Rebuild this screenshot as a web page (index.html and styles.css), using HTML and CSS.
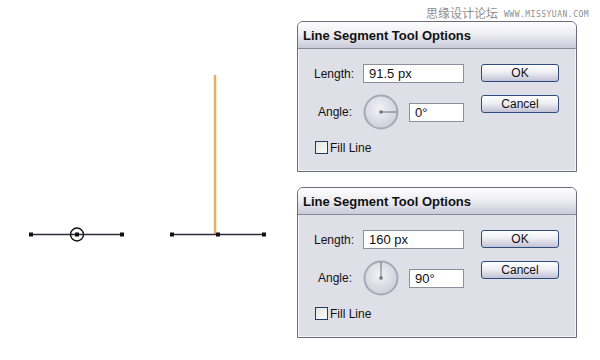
FILE: index.html
```html
<!DOCTYPE html>
<html lang="en">
<head>
  <meta charset="UTF-8" />
  <title>Line Segment Tool Options</title>
  <link rel="stylesheet" href="styles.css">
</head>
<body>
  <div class="pagina">
    <!-- area de desenho com as duas linhas -->
    <svg class="desenho" width="297" height="360" viewBox="0 0 297 360">
      <line x1="31" y1="234.5" x2="122" y2="234.5" class="traco"/>
      <rect x="29" y="232.5" width="4" height="4" class="ponto"/>
      <rect x="120" y="232.5" width="4" height="4" class="ponto"/>
      <rect x="75" y="232.5" width="4" height="4" class="ponto"/>
      <circle cx="77" cy="234.5" r="6.5" class="alvo"/>

      <line x1="215" y1="75" x2="215" y2="234" class="laranja"/>
      <line x1="172" y1="234.5" x2="264" y2="234.5" class="traco"/>
      <rect x="170" y="232.5" width="4" height="4" class="ponto"/>
      <rect x="216" y="232.5" width="4" height="4" class="ponto"/>
      <rect x="262" y="232.5" width="4" height="4" class="ponto"/>
    </svg>

    <div class="dialogos">
      <div class="dialogo">
        <div class="titulo">Line Segment Tool Options</div>
        <div class="corpo">
          <div class="form">
            <span class="rotulo">Length:</span>
            <div class="campo largo">91.5 px</div>
            <span class="rotulo">Angle:</span>
            <div class="linha-angulo">
              <svg class="dial" width="36" height="36" viewBox="0 0 36 36">
                <defs>
                  <radialGradient id="fundo1" cx="45%" cy="40%" r="60%">
                    <stop offset="0" stop-color="#f2f2f6"/>
                    <stop offset="1" stop-color="#cfcfda"/>
                  </radialGradient>
                </defs>
                <circle cx="18" cy="18" r="16.5" fill="url(#fundo1)" stroke="#a6a8b8" stroke-width="2"/>
                <line x1="18" y1="18" x2="34" y2="18" stroke="#6e6e78" stroke-width="1"/>
                <rect x="16.5" y="16.5" width="3" height="3" fill="#6e6e78"/>
              </svg>
              <div class="campo curto">0°</div>
            </div>
            <label class="check"><span class="caixa"></span>Fill Line</label>
          </div>
          <div class="botoes">
            <button class="botao">OK</button>
            <button class="botao">Cancel</button>
          </div>
        </div>
      </div>

      <div class="dialogo">
        <div class="titulo">Line Segment Tool Options</div>
        <div class="corpo">
          <div class="form">
            <span class="rotulo">Length:</span>
            <div class="campo largo">160 px</div>
            <span class="rotulo">Angle:</span>
            <div class="linha-angulo">
              <svg class="dial" width="36" height="36" viewBox="0 0 36 36">
                <defs>
                  <radialGradient id="fundo2" cx="45%" cy="40%" r="60%">
                    <stop offset="0" stop-color="#f2f2f6"/>
                    <stop offset="1" stop-color="#cfcfda"/>
                  </radialGradient>
                </defs>
                <circle cx="18" cy="18" r="16.5" fill="url(#fundo2)" stroke="#a6a8b8" stroke-width="2"/>
                <line x1="18" y1="18" x2="18" y2="2" stroke="#6e6e78" stroke-width="1"/>
                <rect x="16.5" y="16.5" width="3" height="3" fill="#6e6e78"/>
              </svg>
              <div class="campo curto">90°</div>
            </div>
            <label class="check"><span class="caixa"></span>Fill Line</label>
          </div>
          <div class="botoes">
            <button class="botao">OK</button>
            <button class="botao">Cancel</button>
          </div>
        </div>
      </div>
    </div>

    <div class="marca"><span class="marca-cn">思缘设计论坛</span><span class="marca-url">WWW.MISSYUAN.COM</span></div>
  </div>
</body>
</html>
```

FILE: styles.css
```css
body {
  margin: 0;
  background: white;
  font-family: "Liberation Sans", Arial, sans-serif;
}

.pagina {
  position: relative;
  width: 600px;
  height: 360px;
  display: flex;
  overflow: hidden;
}

/* DESENHO */
.desenho {
  display: block;
  flex: none;
}

.traco {
  stroke: #2c2c3c;
  stroke-width: 1.3;
}

.ponto {
  fill: #111;
}

.alvo {
  fill: none;
  stroke: #111;
  stroke-width: 1.4;
}

.laranja {
  stroke: #f5a75c;
  stroke-width: 2.4;
}

/* DIALOGOS */
.dialogos {
  display: flex;
  flex-direction: column;
  gap: 15px;
  padding-top: 21px;
}

.dialogo {
  width: 278px;
  border: 1px solid #6c6c7c;
  border-radius: 6px 6px 0 0;
  background: #dfdfe7;
  box-shadow: inset 0 0 0 1px #f4f4f8;
}

.titulo {
  height: 26px;
  line-height: 27px;
  padding-left: 5px;
  font-weight: bold;
  font-size: 13px;
  color: #111;
  border-radius: 5px 5px 0 0;
  background: linear-gradient(#fdfdfe, #efeff4 45%, #cacad9);
  border-bottom: 1px solid #8a8a9a;
}

.corpo {
  display: flex;
  gap: 17px;
  padding: 15px 0 17px 16px;
}

.form {
  display: grid;
  grid-template-columns: 38px 101px;
  column-gap: 11px;
  row-gap: 11px;
  align-items: center;
  font-size: 12px;
  color: #111;
}

.rotulo {
  text-align: right;
}

.campo {
  box-sizing: border-box;
  height: 19px;
  line-height: 17px;
  padding-left: 5px;
  background: white;
  border: 1px solid #8e8e9c;
  font-size: 13px;
}

.largo {
  width: 101px;
}

.curto {
  width: 55px;
}

.linha-angulo {
  display: flex;
  align-items: center;
  gap: 10px;
}

.dial {
  display: block;
}

.check {
  grid-column: 1 / 3;
  display: flex;
  align-items: center;
  gap: 2px;
  height: 13px;
  margin-left: 1px;
}

.caixa {
  box-sizing: border-box;
  width: 13px;
  height: 13px;
  border: 1px solid #1d3c66;
  background: linear-gradient(135deg, #e4e4e0, #fbfbfb);
}

.botoes {
  display: flex;
  flex-direction: column;
  gap: 13px;
}

.botao {
  width: 78px;
  height: 18px;
  padding: 0;
  font-family: "Liberation Sans", Arial, sans-serif;
  font-size: 12px;
  color: #111;
  border: 1px solid #2e4c7c;
  border-radius: 3px;
  background: linear-gradient(#ffffff, #eeeef4 45%, #c2c2d6);
}

/* marca d'agua por cima */
.marca {
  position: absolute;
  top: 6px;
  left: 426px;
  display: flex;
  align-items: center;
  gap: 6px;
  color: #8e8e8e;
}

.marca-cn {
  font-family: "Noto Sans CJK SC", sans-serif;
  font-size: 12px;
  line-height: 14px;
}

.marca-url {
  font-family: "DejaVu Sans Mono", monospace;
  font-size: 8px;
  letter-spacing: 0.5px;
  padding-top: 2px;
}
```
